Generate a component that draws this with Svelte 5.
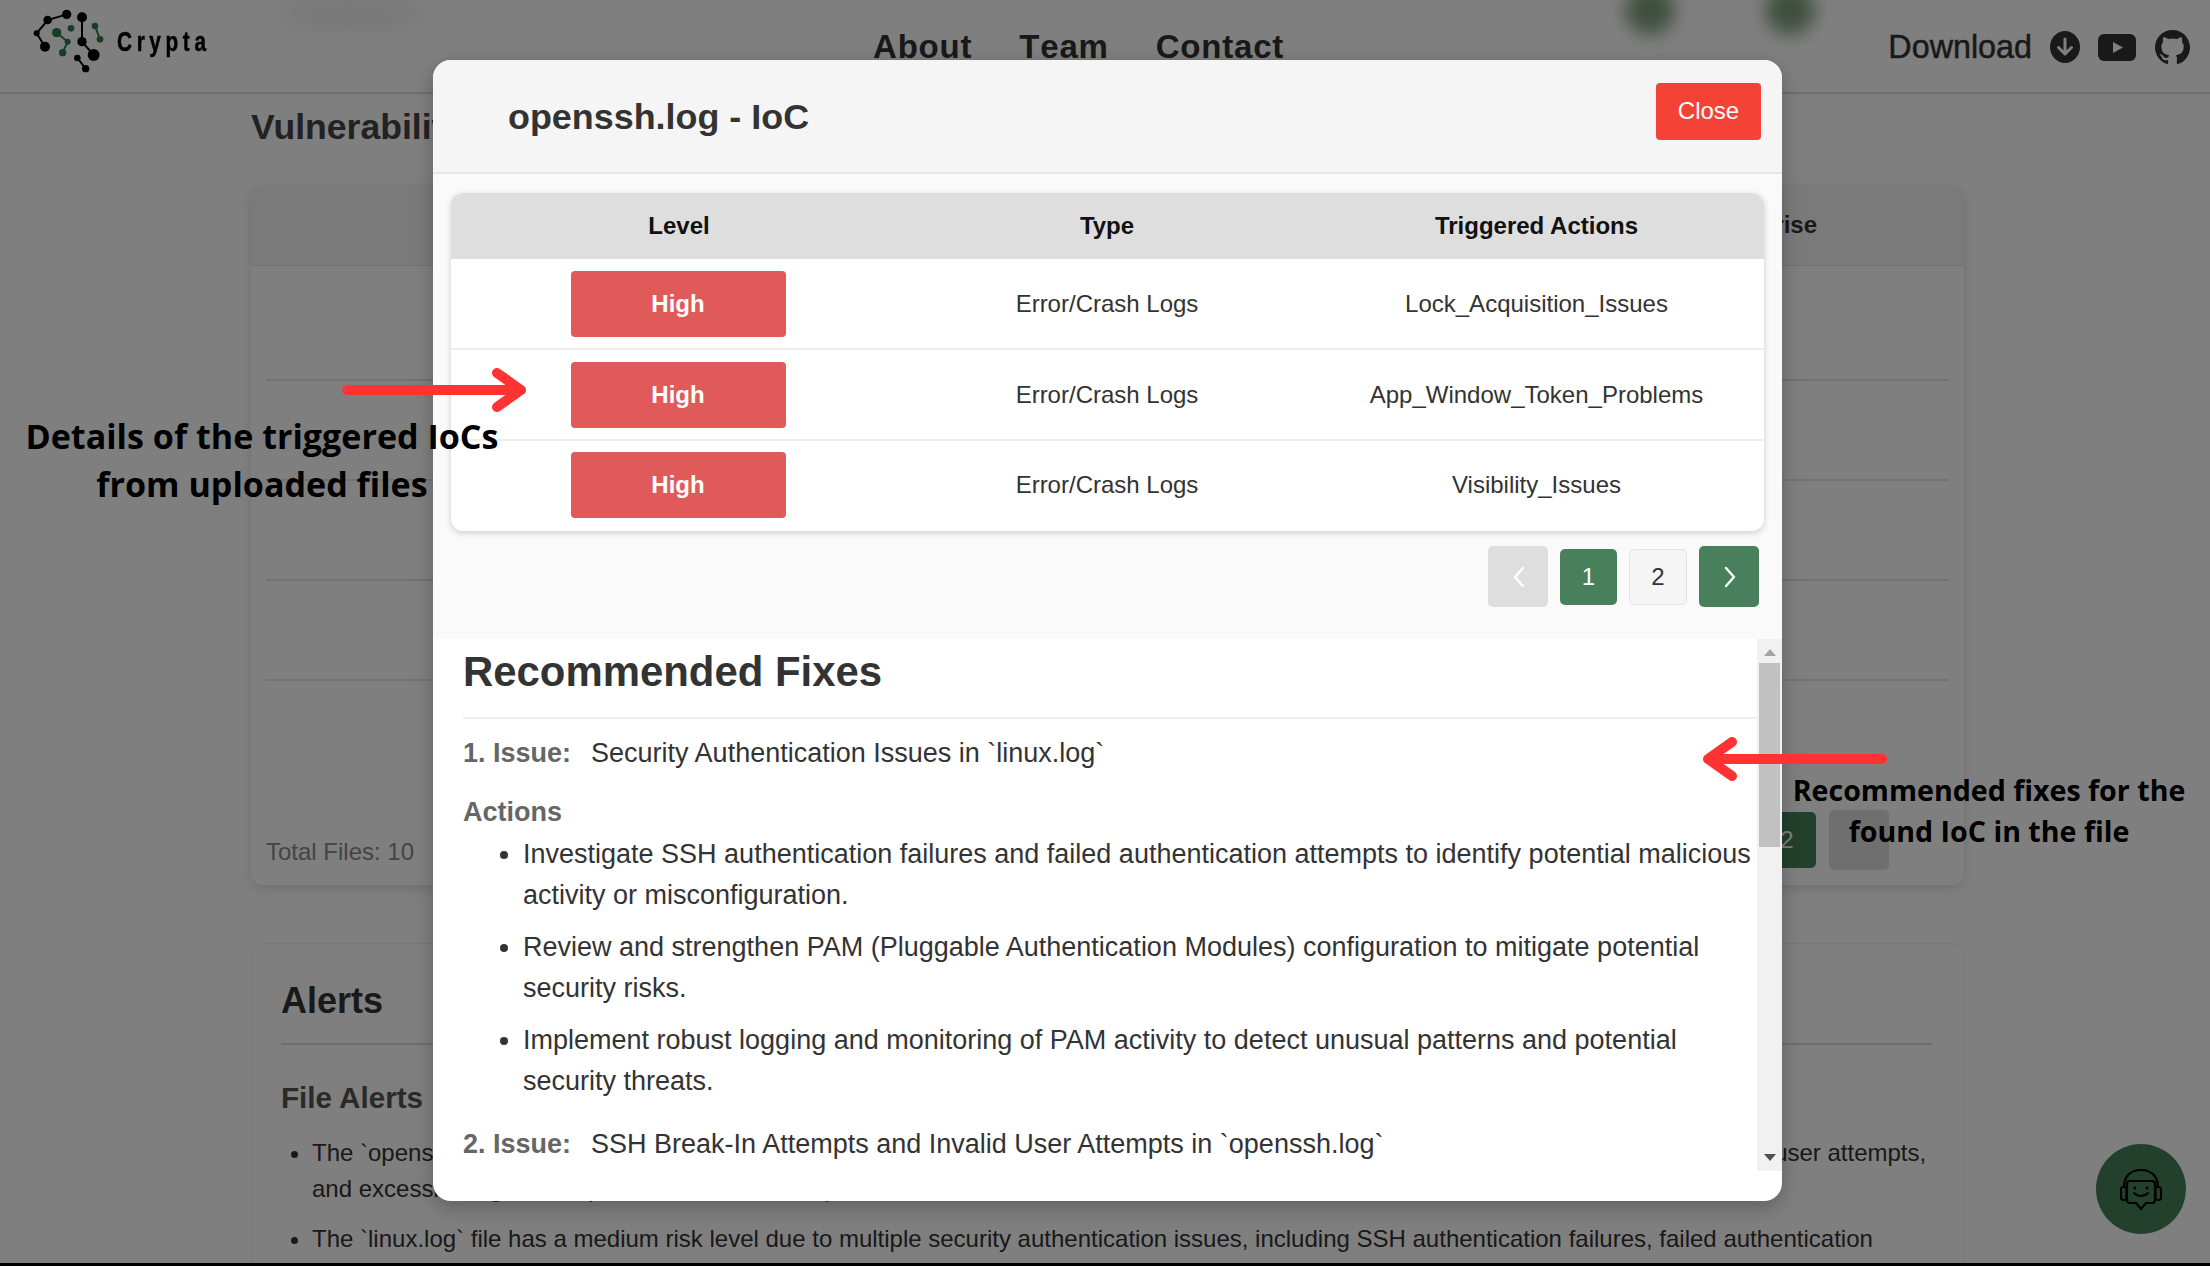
<script>
  const rows = [
    { level: "High", type: "Error/Crash Logs", action: "Lock_Acquisition_Issues" },
    { level: "High", type: "Error/Crash Logs", action: "App_Window_Token_Problems" },
    { level: "High", type: "Error/Crash Logs", action: "Visibility_Issues" }
  ];
  const actions = [
    "Investigate SSH authentication failures and failed authentication attempts to identify potential malicious activity or misconfiguration.",
    "Review and strengthen PAM (Pluggable Authentication Modules) configuration to mitigate potential security risks.",
    "Implement robust logging and monitoring of PAM activity to detect unusual patterns and potential security threats."
  ];
  const blackNodes = [[140,43,14],[83,60,13],[50,100,9],[75,140,15],[186,52,15],[186,125,14],[221,165,18],[172,174,10],[197,206,11]];
  const greenNodes = [[110,98,14],[143,125,9],[128,158,11],[153,85,10],[225,78,10],[240,118,10]];
</script>

<div class="screen">
  <div class="page">
    <header class="topbar">
      <div class="brand">
        <svg class="logo" viewBox="0 0 300 255" aria-hidden="true">
          <path d="M140 43L83 60L50 100L75 140M186 52V125L221 165M172 174L197 206" fill="none" stroke="#000" stroke-width="6" />
          <path d="M110 98L143 125L128 158M225 78L240 118" fill="none" stroke="#2f7a4c" stroke-width="6" />
          {#each blackNodes as n}<circle cx={n[0]} cy={n[1]} r={n[2]} fill="#000" />{/each}
          {#each greenNodes as n}<circle cx={n[0]} cy={n[1]} r={n[2]} fill="#2f7a4c" />{/each}
        </svg>
        <span class="brand-name">Crypta</span>
      </div>
      <nav class="nav"><a href="#about">About</a><a href="#team">Team</a><a href="#contact">Contact</a></nav>
      <div class="tools">
        <span class="download">Download</span>
        <svg class="ic-down" viewBox="0 0 30 32" aria-hidden="true">
          <ellipse cx="15" cy="16" rx="15" ry="16" fill="#333" />
          <path d="M15 8v15M8.5 16.5L15 23l6.5-6.5" fill="none" stroke="#fff" stroke-width="3" stroke-linecap="round" stroke-linejoin="round" />
        </svg>
        <svg class="ic-yt" viewBox="0 0 38 27" aria-hidden="true">
          <rect width="38" height="27" rx="6" fill="#333" />
          <path d="M15 8l10 5.5L15 19z" fill="#fff" />
        </svg>
        <svg class="ic-gh" viewBox="0 0 16 16" aria-hidden="true">
          <path fill="#333" d="M8 0C3.58 0 0 3.58 0 8c0 3.54 2.29 6.53 5.47 7.59.4.07.55-.17.55-.38 0-.19-.01-.82-.01-1.49-2.01.37-2.53-.49-2.69-.94-.09-.23-.48-.94-.82-1.13-.28-.15-.68-.52-.01-.53.63-.01 1.08.58 1.23.82.72 1.21 1.87.87 2.33.66.07-.52.28-.87.51-1.07-1.78-.2-3.64-.89-3.64-3.95 0-.87.31-1.59.82-2.15-.08-.2-.36-1.02.08-2.12 0 0 .67-.21 2.2.82.64-.18 1.32-.27 2-.27.68 0 1.36.09 2 .27 1.53-1.04 2.2-.82 2.2-.82.44 1.1.16 1.92.08 2.12.51.56.82 1.27.82 2.15 0 3.07-1.87 3.75-3.65 3.95.29.25.54.73.54 1.48 0 1.07-.01 1.93-.01 2.2 0 .21.15.46.55.38A8.013 8.013 0 0016 8c0-4.42-3.58-8-8-8z" />
        </svg>
      </div>
    </header>

    <main class="main">
      <h1 class="page-title">Vulnerability Details</h1>
      <section class="files">
        <div class="files-head"><span>Enterprise</span></div>
        <div class="files-rows">
          <div class="file-row first"></div>
          <div class="file-row"></div>
          <div class="file-row"></div>
          <div class="file-row"></div>
        </div>
        <div class="files-foot">
          <span class="total">Total Files: 10</span>
          <div class="bg-pages">
            <span class="bg-page active">2</span>
            <span class="bg-page next"></span>
          </div>
        </div>
      </section>

      <section class="alerts">
        <h2>Alerts</h2>
        <h3>File Alerts</h3>
        <ul>
          <li>The `openssh.log` file has a high risk level because of many SSH break-in attempts, authentication failures, and a large number of invalid user attempts,<br />and excessive login attempts, and it also shows pam failures that should be reviewed</li>
          <li>The `linux.log` file has a medium risk level due to multiple security authentication issues, including SSH authentication failures, failed authentication</li>
        </ul>
      </section>
    </main>

    <button class="chat" aria-label="Chat">
      <svg viewBox="0 0 42 58" aria-hidden="true">
        <path d="M4 27C4 16 11 10 21 10C31 10 38 16 38 27" fill="none" stroke="#000" stroke-width="2.2" />
        <path d="M10 21h22a3 3 0 0 1 3 3v16a3 3 0 0 1-3 3h-6l-5 6-5-6h-6a3 3 0 0 1-3-3V24a3 3 0 0 1 3-3z" fill="none" stroke="#000" stroke-width="2.2" />
        <rect x="1" y="27" width="5.5" height="13" rx="2.5" fill="none" stroke="#000" stroke-width="2.2" />
        <rect x="35.5" y="27" width="5.5" height="13" rx="2.5" fill="none" stroke="#000" stroke-width="2.2" />
        <circle cx="15" cy="28" r="1.4" />
        <circle cx="27" cy="28" r="1.4" />
        <path d="M14 33c4 4 10 4 14 0" fill="none" stroke="#000" stroke-width="2" stroke-linecap="round" />
      </svg>
    </button>

    <!-- blurred-out bits of the screenshot -->
    <span class="smudge grey"></span>
    <span class="smudge green one"></span>
    <span class="smudge green two"></span>
  </div>

  <div class="overlay">
    <div class="modal">
      <div class="modal-head">
        <h2>openssh.log - IoC</h2>
        <button class="close">Close</button>
      </div>

      <div class="modal-top">
        <div class="ioc-table">
          <div class="ioc-row head"><span>Level</span><span>Type</span><span>Triggered Actions</span></div>
          {#each rows as r}
            <div class="ioc-row">
              <span><b class="badge">{r.level}</b></span>
              <span>{r.type}</span>
              <span>{r.action}</span>
            </div>
          {/each}
        </div>
        <div class="pager">
          <button class="arrow off" aria-label="Previous">
            <svg viewBox="0 0 16 28"><path d="M12 5L4 14l8 9" fill="none" stroke="#fff" stroke-width="2.4" stroke-linecap="round" stroke-linejoin="round" /></svg>
          </button>
          <button class="num on">1</button>
          <button class="num">2</button>
          <button class="arrow" aria-label="Next">
            <svg viewBox="0 0 16 28"><path d="M4 5l8 9-8 9" fill="none" stroke="#fff" stroke-width="2.4" stroke-linecap="round" stroke-linejoin="round" /></svg>
          </button>
        </div>
      </div>

      <div class="fixes">
        <div class="fixes-scroll">
          <h2>Recommended Fixes</h2>
          <div class="issue"><b>1. Issue:</b><span>Security Authentication Issues in `linux.log`</span></div>
          <h4>Actions</h4>
          <ul>
            {#each actions as a}<li>{a}</li>{/each}
          </ul>
          <div class="issue second"><b>2. Issue:</b><span>SSH Break-In Attempts and Invalid User Attempts in `openssh.log`</span></div>
        </div>
        <div class="scrollbar">
          <i class="tri up"></i>
          <i class="thumb"></i>
          <i class="tri down"></i>
        </div>
      </div>
    </div>
  </div>

  <!-- annotations laid over the screenshot -->
  <svg class="arrows" viewBox="0 0 2210 1266" aria-hidden="true">
    <path d="M347 390H521M497 373L521 390L497 407" />
    <path d="M1882 759H1708M1732 742L1708 759L1732 776" />
  </svg>
  <p class="note left">Details of the triggered IoCs<br />from uploaded files</p>
  <p class="note right">Recommended fixes for the<br />found IoC in the file</p>
</div>

<style>
  :global(body) {
    margin: 0;
    background: #fff;
    font-family: "Liberation Sans", Arial, sans-serif;
  }

  .screen {
    position: relative;
    width: 2210px;
    height: 1266px;
    overflow: hidden;
    border-bottom: 3px solid #000;
    box-sizing: border-box;
  }

  .page {
    height: 100%;
    color: #333;
    background: #fff;
  }

  .topbar {
    display: flex;
    align-items: center;
    height: 92px;
    border-bottom: 2px solid #ddd;
    padding: 0 20px 0 20px;
  }

  .brand {
    display: flex;
    align-items: center;
    width: 853px;
    height: 85px;
    margin-top: -7px;
  }

  .logo {
    width: 100px;
    height: 85px;
    margin-right: -3px;
  }

  .brand-name {
    display: inline-block;
    font-weight: 700;
    font-size: 27px;
    letter-spacing: 6px;
    color: #000;
    -webkit-text-stroke: 0.5px #000;
    transform: scaleX(0.77);
    transform-origin: left center;
  }

  .nav {
    display: flex;
    gap: 47px;
    margin-top: 2px;
  }

  .nav a {
    font-weight: 700;
    font-size: 33px;
    letter-spacing: 0.8px;
    font-kerning: none;
    color: #333;
    text-decoration: none;
  }

  .tools {
    display: flex;
    align-items: center;
    margin-left: auto;
    margin-top: 2px;
  }

  .download {
    font-size: 32.3px;
    margin-right: 18px;
    -webkit-text-stroke: 0.5px #333;
  }

  .ic-down { width: 30px; height: 32px; margin-right: 18px; }
  .ic-yt { width: 38px; height: 27px; margin-right: 19px; }
  .ic-gh { width: 35px; height: 35px; }

  .main {
    padding-left: 251px;
    width: 1713px;
  }

  .page-title {
    margin: 0;
    padding-top: 11px;
    height: 91px;
    line-height: 44px;
    font-size: 35.6px;
    box-sizing: border-box;
    color: #444;
  }

  .files {
    height: 700px;
    border-radius: 12px;
    box-shadow: 0 4px 12px rgba(0, 0, 0, 0.12);
    display: flex;
    flex-direction: column;
  }

  .files-head {
    height: 81px;
    box-sizing: border-box;
    flex: none;
    background: #f4f4f4;
    border-bottom: 1px solid #e4e4e4;
    border-radius: 12px 12px 0 0;
    display: flex;
    align-items: center;
    justify-content: flex-end;
    padding-right: 147px;
    font-weight: 700;
    font-size: 24px;
    color: #333;
  }

  .files-rows {
    padding: 0 15px;
  }

  .file-row {
    height: 100px;
    border-bottom: 2px solid #e4e4e4;
    box-sizing: border-box;
  }

  .file-row.first { height: 115px; }

  .files-foot {
    flex: 1;
    display: flex;
    justify-content: space-between;
    align-items: flex-end;
    padding: 0 75px 15px 15px;
  }

  .total {
    font-size: 24px;
    line-height: 28px;
    margin-bottom: 4px;
    color: #888;
  }

  .bg-pages {
    display: flex;
    gap: 13px;
    align-items: center;
  }

  .bg-page {
    width: 58px;
    height: 56px;
    border-radius: 5px;
    display: flex;
    align-items: center;
    justify-content: center;
    font-size: 24px;
  }

  .bg-page.active { background: #47805a; color: #fff; }
  .bg-page.next { width: 60px; height: 60px; background: #dedede; }

  .alerts {
    margin-top: 58px;
    padding: 35px 31px 0 29px;
    height: 400px;
    border: 1px solid #eee;
    border-radius: 12px 12px 0 0;
    box-sizing: border-box;
  }

  .alerts h2 {
    margin: 0;
    font-size: 36px;
    line-height: 44px;
    padding-bottom: 20px;
    border-bottom: 2px solid #ddd;
    color: #333;
  }

  .alerts h3 {
    margin: 33px 0 0;
    font-size: 29.6px;
    line-height: 40px;
    color: #555;
  }

  .alerts ul {
    margin: 17px 0 0;
    padding-left: 31px;
    font-size: 24px;
    line-height: 36px;
    white-space: nowrap;
    color: #333;
  }

  .alerts li + li { margin-top: 14px; }

  .chat {
    position: absolute;
    left: 2096px;
    top: 1144px;
    width: 90px;
    height: 90px;
    border: 0;
    padding: 0;
    border-radius: 50%;
    background: #47805a;
    display: flex;
    align-items: center;
    justify-content: center;
  }

  .chat svg { width: 42px; height: 58px; }

  .smudge {
    position: absolute;
    border-radius: 50%;
  }

  .smudge.grey {
    left: 275px;
    top: 4px;
    width: 150px;
    height: 20px;
    background: #e8e8e8;
    filter: blur(12px);
  }

  .smudge.green {
    top: -15px;
    width: 50px;
    height: 50px;
    background: #7fa07d;
    filter: blur(9px);
  }

  .smudge.one { left: 1625px; }
  .smudge.two { left: 1765px; }

  .overlay {
    position: absolute;
    inset: 0;
    background: rgba(0, 0, 0, 0.5);
    padding: 60px 428px 0 433px;
    box-sizing: border-box;
  }

  .modal {
    height: 1141px;
    border-radius: 18px;
    background: #fff;
    overflow: hidden;
    box-shadow: 0 6px 20px rgba(0, 0, 0, 0.25);
    display: flex;
    flex-direction: column;
    color: #333;
  }

  .modal-head {
    height: 114px;
    box-sizing: border-box;
    flex: none;
    background: #f5f5f5;
    border-bottom: 2px solid #e6e6e6;
    display: flex;
    justify-content: space-between;
    align-items: flex-start;
    padding: 23px 21px 0 75px;
  }

  .modal-head h2 {
    margin: 12px 0 0;
    font-size: 35.9px;
    line-height: 44px;
    color: #333;
  }

  .close {
    width: 105px;
    height: 57px;
    border: 0;
    border-radius: 4px;
    padding: 0 0 2px;
    background: #f44336;
    color: #fff;
    font-family: inherit;
    font-size: 24px;
  }

  .modal-top {
    height: 465px;
    flex: none;
    box-sizing: border-box;
    background: #fafafa;
    padding: 19px 18px 0;
  }

  .ioc-table {
    border-radius: 12px;
    overflow: hidden;
    background: #fff;
    box-shadow: 0 2px 6px rgba(0, 0, 0, 0.18);
  }

  .ioc-row {
    display: grid;
    grid-template-columns: 456px 400px 459px;
    align-items: center;
    justify-items: center;
    height: 91px;
    box-sizing: border-box;
    border-bottom: 2px solid #eee;
    font-size: 24px;
    color: #333;
  }

  .ioc-row:last-child { border-bottom: 0; height: 90px; padding-bottom: 2px; }

  .ioc-row.head {
    height: 66px;
    background: #dedede;
    border-bottom: 0;
    font-weight: 700;
    color: #111;
  }

  .badge {
    display: flex;
    align-items: center;
    justify-content: center;
    width: 215px;
    height: 66px;
    margin-left: -2px;
    border-radius: 4px;
    background: #e05a5a;
    color: #fff;
    font-size: 24px;
  }

  .pager {
    display: flex;
    justify-content: flex-end;
    align-items: center;
    gap: 12px;
    margin-top: 15px;
    padding-right: 5px;
  }

  .pager button {
    padding: 0;
    border: 0;
    border-radius: 5px;
    display: flex;
    align-items: center;
    justify-content: center;
    font-family: inherit;
    font-size: 24px;
  }

  .arrow { width: 60px; height: 61px; background: #47805a; }
  .arrow.off { background: #dedede; }
  .arrow svg { width: 16px; height: 28px; margin-left: 1px; }

  .num {
    width: 58px;
    height: 56px;
    background: #f5f5f5;
    color: #333;
    box-shadow: inset 0 0 0 1px #e3e3e3;
  }

  .num.on { width: 57px; background: #47805a; color: #fff; box-shadow: none; }

  .fixes {
    height: 532px;
    flex: none;
    display: flex;
    background: #fff;
  }

  .fixes-scroll {
    flex: 1;
    min-width: 0;
    padding-left: 30px;
    overflow: hidden;
  }

  .fixes-scroll h2 {
    margin: 8px 0 0;
    padding-bottom: 20px;
    border-bottom: 2px solid #eee;
    font-size: 41.9px;
    line-height: 50px;
    color: #333;
  }

  .issue {
    display: flex;
    gap: 20px;
    margin-top: 14px;
    font-size: 27px;
    line-height: 40px;
    color: #333;
  }

  .issue b { color: #666; }
  .issue.second { margin-top: 22px; }

  h4 {
    margin: 19px 0 0;
    font-size: 27px;
    line-height: 40px;
    color: #666;
  }

  .fixes-scroll ul {
    margin: 2px 0 0;
    padding-left: 60px;
    font-size: 27px;
    line-height: 41px;
  }

  .fixes-scroll li + li { margin-top: 11px; }

  .scrollbar {
    width: 25px;
    flex: none;
    background: #f1f1f1;
    display: flex;
    flex-direction: column;
    align-items: center;
  }

  .thumb {
    display: block;
    width: 21px;
    height: 184px;
    margin: 7px 0 auto;
    background: #c1c1c1;
  }

  .tri {
    display: block;
    width: 0;
    height: 0;
    border-left: 6px solid transparent;
    border-right: 6px solid transparent;
  }

  .tri.up { margin-top: 10px; border-bottom: 7px solid #a3a3a3; }
  .tri.down { margin-bottom: 10px; border-top: 7px solid #505050; }

  .arrows {
    position: absolute;
    inset: 0;
    width: 2210px;
    height: 1266px;
    pointer-events: none;
  }

  .arrows path {
    fill: none;
    stroke: #ff3333;
    stroke-width: 10;
    stroke-linecap: round;
    stroke-linejoin: round;
  }

  .note {
    position: absolute;
    margin: 0;
    text-align: center;
    font-family: "Open Sans", sans-serif;
    font-weight: 700;
    color: #000;
    white-space: nowrap;
    transform: translateX(-50%);
  }

  .note.left {
    left: 262px;
    top: 412px;
    font-size: 34.1px;
    line-height: 48px;
  }

  .note.right {
    left: 1989px;
    top: 769px;
    font-size: 28.6px;
    line-height: 41px;
  }
</style>
